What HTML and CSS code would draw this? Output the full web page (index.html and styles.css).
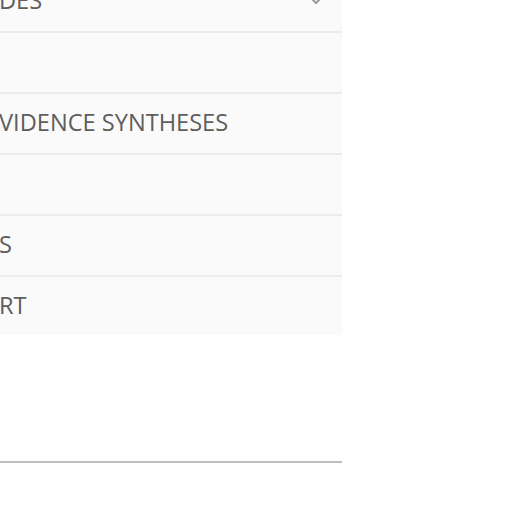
FILE: index.html
```html
<!DOCTYPE html>
<html lang="en">
<head>
<meta charset="utf-8">
<link rel="stylesheet" href="styles.css">
</head>
<body>
<div class="page">
  <ul class="menu">
    <li class="item"><span class="label">DES</span>
      <svg class="chev" width="12" height="10" viewBox="0 0 12 10"><path d="M2 2 L6 6 L10 2" fill="none" stroke="#999999" stroke-width="2"/></svg>
    </li>
    <li class="item"><span class="label"></span></li>
    <li class="item"><span class="label">VIDENCE SYNTHESES</span></li>
    <li class="item"><span class="label"></span></li>
    <li class="item"><span class="label">S</span></li>
    <li class="item"><span class="label">RT</span></li>
  </ul>
  <div class="rule"></div>
</div>
</body>
</html>
```
FILE: styles.css
```css
html, body {
  margin: 0;
  padding: 0;
  background: #ffffff;
}
.page {
  width: 342px;
  font-family: "Open Sans", "Noto Sans", sans-serif;
}
.menu {
  list-style: none;
  margin: -28px 0 0 0;
  padding: 0;
  background: #fafafa;
}
.item {
  height: 59px;
  border-bottom: 2px solid #ececec;
  display: flex;
  align-items: center;
  justify-content: space-between;
  padding: 0 20px 0 0;
  overflow: hidden;
}
.item:last-child {
  border-bottom: none;
  height: 58px;
}
.label {
  font-size: 23.6px;
  color: #5e5e5e;
  margin-left: -1px;
  margin-bottom: 3px;
  white-space: nowrap;
}
.chev {
  display: block;
}
.rule {
  margin-top: 126px;
  height: 2px;
  background: #bdbdbd;
}
```
